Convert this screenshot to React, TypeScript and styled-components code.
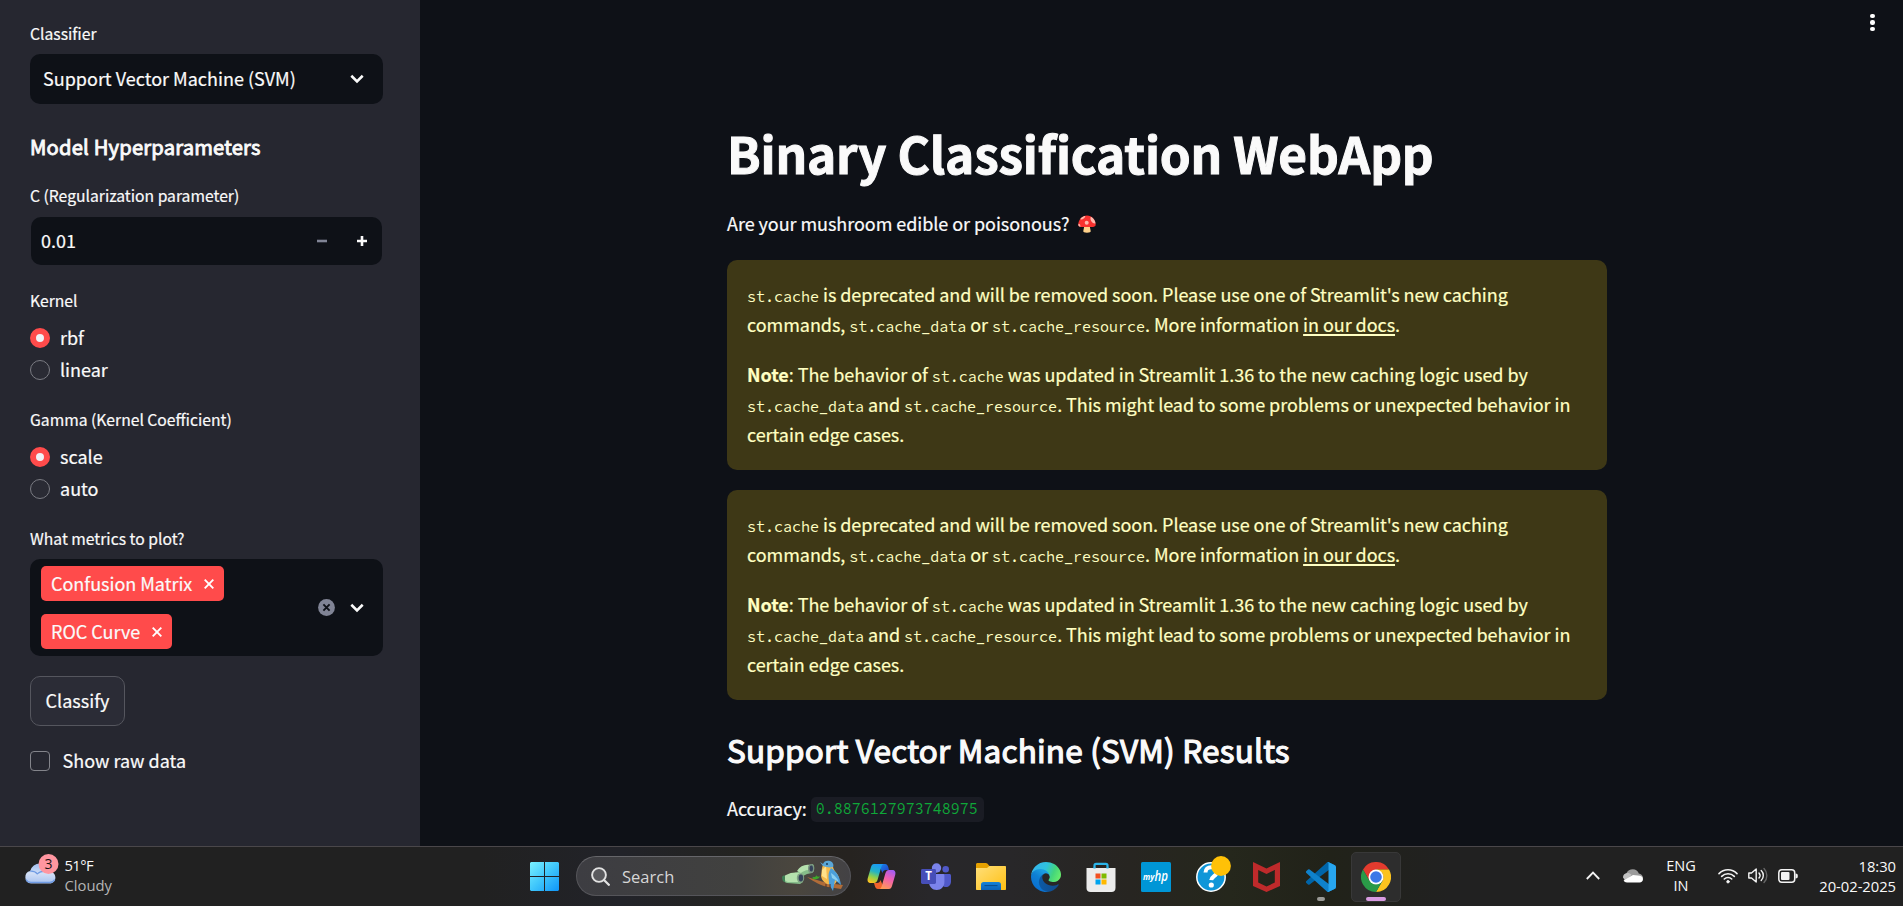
import React from 'react';
import styled, { createGlobalStyle } from 'styled-components';

const sans = `"Source Sans Pro", "Noto Sans CJK SC", "Noto Sans", sans-serif`;
const mono = `"Source Code Pro", "Noto Sans Mono CJK SC", "DejaVu Sans Mono", monospace`;
const system = `"Segoe UI", "Open Sans", "Noto Sans", sans-serif`;

const GlobalStyle = createGlobalStyle`
  * { box-sizing: border-box; }
  html, body { margin: 0; padding: 0; background: #0e1117; overflow: hidden; }
  svg { display: block; flex: none; }
`;

const Screen = styled.div`
  width: 1903px;
  height: 906px;
  display: flex;
  flex-direction: column;
  color: #fafafa;
  font-family: ${sans};
  font-size: 18px;
  overflow: hidden;
`;

const Workspace = styled.div`
  height: 846px;
  display: flex;
  -webkit-text-stroke: 0.2px currentColor;
`;

/* ---------- sidebar ---------- */

const Sidebar = styled.aside`
  width: 420px;
  flex: none;
  background: #262730;
  padding: 20px 37px 0 30px;
  display: flex;
  flex-direction: column;
  align-items: stretch;
`;

const FieldLabel = styled.div<{ $top?: number }>`
  margin-top: ${p => p.$top ?? 0}px;
  height: 28px;
  line-height: 28px;
  font-size: 15.7px;
  white-space: nowrap;
`;

const SelectBox = styled.div`
  margin-top: 6px;
  height: 50px;
  border-radius: 10px;
  background: #0e1117;
  display: flex;
  align-items: center;
  justify-content: space-between;
  padding: 0 19px 0 13px;
  white-space: nowrap;
`;

const Caption = styled.span`
  padding-bottom: 2px;
`;

const SidebarHeading = styled.h2`
  margin: 29px 0 0;
  height: 30px;
  line-height: 27px;
  font-size: 20.2px;
  font-weight: 400;
  -webkit-text-stroke-width: 0.9px;
  letter-spacing: 0.18px;
  white-space: nowrap;
`;

const NumberBox = styled.div`
  margin: 7px 1px 0;
  height: 48px;
  border-radius: 10px;
  background: #0e1117;
  display: flex;
  align-items: center;
  padding: 0 13px 0 10px;
`;

const NumberValue = styled.span`
  flex: 1;
  padding-bottom: 2px;
`;

const StepButton = styled.span<{ $disabled?: boolean }>`
  width: 12px;
  margin-left: 28px;
  color: ${p => (p.$disabled ? '#808495' : '#fafafa')};
`;

const RadioList = styled.div`
  margin-top: 7px;
  display: flex;
  flex-direction: column;
`;

const RadioRow = styled.label`
  height: 32px;
  display: flex;
  align-items: center;
  gap: 10px;
`;

const RadioDot = styled.span<{ $on?: boolean }>`
  width: 20px;
  height: 20px;
  border-radius: 50%;
  border: ${p => (p.$on ? '6px solid #ff4b4b' : '1px solid #7b7c83')};
  background: ${p => (p.$on ? '#f0f2f6' : '#2a2b34')};
`;

const MultiSelect = styled.div`
  margin-top: 6px;
  height: 97px;
  border-radius: 10px;
  background: #0e1117;
  display: flex;
  align-items: center;
  padding: 0 19px 0 11px;
`;

const Tags = styled.div`
  flex: 1;
  display: flex;
  flex-direction: column;
  align-items: flex-start;
  gap: 13px;
`;

const Tag = styled.span`
  height: 35px;
  border-radius: 5px;
  background: #ff4b4b;
  display: flex;
  align-items: center;
  gap: 11.5px;
  padding: 0 10px;
  letter-spacing: -0.02px;
  white-space: nowrap;
`;

const SelectActions = styled.div`
  display: flex;
  align-items: center;
  gap: 15px;
`;

const ClassifyButton = styled.button`
  align-self: flex-start;
  margin: 20px 0 0;
  width: 95px;
  height: 50px;
  border: 1px solid #55565e;
  border-radius: 10px;
  background: #2b2c36;
  color: #fafafa;
  font: inherit;
  padding: 0 0 2px;
`;

const CheckRow = styled.label`
  margin-top: 20px;
  height: 30px;
  display: flex;
  align-items: center;
  gap: 12.5px;
`;

const CheckSquare = styled.span`
  width: 20px;
  height: 20px;
  border: 1px solid #83848a;
  border-radius: 4px;
`;

/* ---------- main column ---------- */

const Main = styled.main`
  flex: 1;
  display: grid;
  grid-template-columns: 880px 1fr;
  padding-left: 307px;
`;

const Content = styled.div`
  display: flex;
  flex-direction: column;
  padding-top: 120px;
`;

const MenuDots = styled.div`
  justify-self: end;
  display: flex;
  flex-direction: column;
  gap: 2px;
  padding: 14px 28.5px 0 0;
`;

const Dot = styled.span`
  width: 4.4px;
  height: 4.4px;
  border-radius: 50%;
  background: #fff;
`;

const Title = styled.h1`
  margin: 0;
  height: 70px;
  line-height: 66px;
  font-size: 49.5px;
  font-weight: 700;
  letter-spacing: -0.18px;
  -webkit-text-stroke-width: 1px;
  white-space: nowrap;
`;

const Intro = styled.p`
  margin: 19px 0 21px;
  height: 30px;
  display: flex;
  align-items: center;
  gap: 8.500px;
  letter-spacing: -0.05px;
`;

const Alert = styled.div`
  height: 210px;
  margin-bottom: 20px;
  padding: 19px 20px;
  border-radius: 10px;
  background: #3e3816;
  color: #ffffc2;
`;

const AlertText = styled.p`
  margin: 0 0 20px;
  line-height: 30px;
`;

const Line = styled.span`
  display: block;
  height: 30px;
  letter-spacing: -0.05px;
  white-space: nowrap;
`;

const Code = styled.code`
  font-family: ${mono};
  font-size: 15px;
  letter-spacing: 0;
  line-height: 1;
  -webkit-text-stroke-width: 0;
`;

const DocsLink = styled.a`
  text-decoration: underline;
  text-decoration-thickness: 2px;
  text-underline-offset: 2px;
  text-decoration-skip-ink: none;
`;

const ResultHeading = styled.h2`
  margin: 9px 0 0;
  height: 46px;
  line-height: 40px;
  font-size: 31.5px;
  font-weight: 400;
  -webkit-text-stroke-width: 1.2px;
  letter-spacing: 0.2px;
  white-space: nowrap;
`;

const Accuracy = styled.p`
  margin: 19px 0 0;
  height: 30px;
  display: flex;
  align-items: center;
  gap: 4px;
  letter-spacing: -0.05px;
`;

const Score = styled.code`
  height: 25px;
  line-height: 24px;
  padding: 0 6px 0 5px;
  border-radius: 5px;
  background: #1a1c24;
  color: #0fa839;
  font-family: ${mono};
  font-size: 15px;
  letter-spacing: 0;
  -webkit-text-stroke-width: 0;
`;

/* ---------- taskbar ---------- */

const Taskbar = styled.footer`
  height: 60px;
  border-top: 1px solid #4a474a;
  background: linear-gradient(90deg, #212121 0, #212121 480px, #222329 620px, #24241f 770px, #262320 850px, #28272a 930px, #282729 1010px, #272521 1130px, #25271c 1230px, #212219 1330px, #212121 1450px);
  display: flex;
  font-family: ${system};
  font-size: 15px;
`;

const Weather = styled.div`
  width: 517px;
  padding: 7px 0 0 24px;
  display: flex;
  align-items: flex-start;
  gap: 5.5px;
`;

const WeatherText = styled.div`
  padding-top: 1px;
  line-height: 20px;
  font-size: 14.8px;
`;

const Temperature = styled.div`
  letter-spacing: -0.6px;
`;

const Muted = styled.div`
  color: #b5b5b5;
`;

const Slot = styled.div`
  width: 55px;
  flex: none;
  height: 59px;
  display: flex;
  align-items: center;
  justify-content: center;
  position: relative;
`;

const ActiveTile = styled.div`
  width: 50px;
  height: 50px;
  border: 1px solid #383838;
  border-radius: 5px;
  background: #2d2d2d;
  display: flex;
  align-items: center;
  justify-content: center;
`;

const Indicator = styled.span<{ $wide?: boolean }>`
  position: absolute;
  bottom: 5px;
  left: 50%;
  transform: translateX(-50%);
  width: ${p => (p.$wide ? 20 : 8)}px;
  height: 4px;
  border-radius: 2px;
  background: ${p => (p.$wide ? '#d99be2' : '#9a9a96')};
`;

const SearchBox = styled.div`
  margin: 9px 2.5px 0 4px;
  width: 275px;
  height: 40px;
  border: 1px solid #55555a;
  border-top-color: #66666a;
  border-radius: 20px;
  background: linear-gradient(90deg, #3d3d42, #41413f 60%, #4a463e 80%, #434245);
  display: flex;
  align-items: center;
  padding: 0 6px 0 14px;
  gap: 12px;
  color: #d6d6d6;
  font-size: 16.5px;
`;

const SearchWord = styled.span`
  flex: 1;
`;

const Tray = styled.div`
  flex: 1;
  display: flex;
  align-items: center;
  justify-content: flex-end;
  padding: 0 7px 2px 0;
`;

const TrayItem = styled.div<{ $w: number }>`
  width: ${p => p.$w}px;
  display: flex;
  justify-content: center;
`;

const Language = styled.div`
  width: 56px;
  text-align: center;
  line-height: 20px;
  font-size: 14.5px;
`;

const Clock = styled.div`
  width: 89px;
  text-align: right;
  line-height: 20px;
  font-size: 14.8px;
  letter-spacing: -0.05px;
  white-space: nowrap;
`;

/* ---------- icons ---------- */

const ChevronDown = () => (
  <svg width="14" height="10" viewBox="0 0 14 10" fill="none" stroke="#fafafa" strokeWidth="2.6">
    <path d="M1.3 1.8 7 7.4l5.700-5.600" />
  </svg>
);

const Cross = () => (
  <svg width="10" height="10" viewBox="0 0 10 10" fill="none" stroke="#fff" strokeWidth="1.9">
    <path d="M.7.7l8.600 8.600M9.300.7.7 9.300" />
  </svg>
);

const ClearIcon = () => (
  <svg width="17" height="17" viewBox="0 0 17 17">
    <circle cx="8.5" cy="8.500" r="8.400" fill="#808495" />
    <path d="M5.400 5.400l6.200 6.200M11.600 5.400l-6.200 6.200" stroke="#0e1117" strokeWidth="1.900" />
  </svg>
);

const Minus = () => (
  <svg width="10" height="10" viewBox="0 0 10 10"><path d="M0 3.700h10v2.600H0z" fill="currentColor" /></svg>
);

const Plus = () => (
  <svg width="10" height="10" viewBox="0 0 10 10"><path d="M0 3.700h3.700V0h2.600v3.700H10v2.600H6.300V10H3.700V6.300H0z" fill="currentColor" /></svg>
);

const Mushroom = () => (
  <svg width="18" height="18" viewBox="0 0 18 18">
    <path d="M6.500 10h5l1.200 6c.2 1-1 1.700-3.700 1.700S5.100 17 5.300 16z" fill="#ffd18a" />
    <path d="M9 .5c5 0 8.700 4.600 8.700 9.300 0 2-2.200 2.200-4 2.200H4.300c-1.800 0-4-.2-4-2.200C.3 5 4 .5 9 .5z" fill="#f8312f" />
    <circle cx="8.700" cy="7.800" r="2" fill="#ffb8ac" />
    <path d="M3.300 2.800C5 1.300 6.600.8 7.200.9c.4 1.300-2 3.500-4.300 3.600-.7 0-.5-.9.400-1.700zM13 1.800c2.700 1.500 4.400 4 4.500 6.600-1.500.5-3.700-.8-4.500-2.700-.7-1.700-.7-3.400 0-3.900zM.5 8.800c1.400 0 2.200 1.500 1.900 3.100C1.200 11.600.3 11 .3 9.800z" fill="#ffb8ac" />
  </svg>
);

const WeatherIcon = () => (
  <svg width="35" height="31" viewBox="0 0 35 31">
    <defs>
      <linearGradient id="cloudFill" x1="0" y1="0" x2="0" y2="1">
        <stop offset="0" stopColor="#9fbef0" /><stop offset=".5" stopColor="#d2dff6" /><stop offset="1" stopColor="#a9c3f0" />
      </linearGradient>
    </defs>
    <path d="M7 29.500a6.300 6.300 0 0 1-.8-12.400A10 10 0 0 1 16 9.500c5.500 0 9.600 3.500 10.400 8.200 3.200.3 5 2.900 5 5.800 0 3.500-2.400 6-5.700 6z" fill="url(#cloudFill)" />
    <path d="M6.200 17.200c3-.2 5.500.8 7 2.600 3-3 9-3 13.200-2M2 25.500c1.200 2.300 3 2.900 5 2.900h18.700c2.500 0 4-1 5-2.800" fill="none" stroke="#6f9be4" strokeWidth="1.200" />
    <circle cx="24.500" cy="10" r="10" fill="#ff96a0" />
    <text x="24.500" y="15" textAnchor="middle" fontSize="14" fill="#1c1416" fontFamily="Open Sans, sans-serif">3</text>
  </svg>
);

const WindowsIcon = () => (
  <svg width="29" height="29" viewBox="0 0 29 29">
    <defs>
      <linearGradient id="winFill" gradientUnits="userSpaceOnUse" x1="0" y1="0" x2="29" y2="29">
        <stop offset="0" stopColor="#7af2ff" /><stop offset=".5" stopColor="#3fc6fb" /><stop offset="1" stopColor="#0f95f8" />
      </linearGradient>
    </defs>
    <path d="M1 0h13v14H0V1zM15 0h13l1 1v13H15zM0 15h14v14H1l-1-1zM15 15h14v13l-1 1H15z" fill="url(#winFill)" />
  </svg>
);

const SearchIcon = () => (
  <svg width="19" height="19" viewBox="0 0 19 19" fill="none" stroke="#e2e2e2">
    <circle cx="8" cy="8" r="6.900" strokeWidth="1.900" fill="#5a5a5e" />
    <path d="M13 13l4.800 4.800" strokeWidth="2.300" strokeLinecap="round" />
  </svg>
);

const SearchArt = () => (
  <svg width="62" height="32" viewBox="0 0 62 32">
    <path d="M2 16l14-4c2-4 5-6 8-6l6-2c3 0 3 8 0 9l-5 1-4 2v6l-3 2-13-1c-4-1-5-5-3-7z" fill="#86bd8a" />
    <path d="M4 15c5-3 10-3 15-2l-2 9H6c-4-1-5-5-2-7zM15 11c3-5 8-7 13-6l-1 5c-4 0-7 2-8 3z" fill="#b5e2ae" />
    <ellipse cx="29" cy="8.500" rx="3" ry="4.500" fill="#77917f" /><ellipse cx="29.300" cy="8.500" rx="1.700" ry="3" fill="#35435a" />
    <ellipse cx="18.500" cy="18" rx="3.700" ry="4.800" fill="#7fa284" /><ellipse cx="18.900" cy="18" rx="2.300" ry="3.400" fill="#35435a" />
    <path d="M0 17c1-2 3-2 3 0v5c-2 0-3-2-3-5z" fill="#3f7f55" />
    <path d="M25 17l20 6 16 2-2 4-13-2c-6-1-14-5-21-10z" fill="#b06c38" />
    <path d="M30 18c2-2 4 0 4-3 1 2 3 2 4 1-1 4-6 4-8 2z" fill="#3fa629" />
    <path d="M40 8c1-5 4-7 8-6l3 4c0 5 5 7 6 12l-4 6c-8 2-13-2-14-8z" fill="#f5b94b" />
    <path d="M40 10l4-4 1 13-5-3z" fill="#ffe18a" />
    <path d="M41 4c1-3 4-4 7-3 3 1 4 4 3 6-3 1-7 0-10-1l-3-4z" fill="#5aa7d8" />
    <path d="M49 8c6 4 9 9 10 17l-6-5-2 11-4-7c0-6-2-10 2-16z" fill="#4b9fdb" />
    <path d="M49 13c5 3 7 7 8 9l-7-4z" fill="#8bcff0" />
    <circle cx="45" cy="4" r=".9" fill="#16324a" />
    <path d="M44 24v3M48 24v4" stroke="#533322" strokeWidth="1" />
  </svg>
);

const CopilotIcon = () => (
  <svg width="29" height="27" viewBox="0 0 29 27">
    <defs>
      <linearGradient id="copA" x1=".6" y1="0" x2=".3" y2="1">
        <stop offset="0" stopColor="#1a9af5" /><stop offset=".4" stopColor="#23b3c5" /><stop offset=".7" stopColor="#8fd04b" /><stop offset="1" stopColor="#ffc31f" />
      </linearGradient>
      <linearGradient id="copB" x1=".7" y1="0" x2=".3" y2="1">
        <stop offset="0" stopColor="#a55cf2" /><stop offset=".45" stopColor="#f260ae" /><stop offset="1" stopColor="#ff9a55" />
      </linearGradient>
      <linearGradient id="copC" x1="0" y1="0" x2="1" y2="1">
        <stop offset="0" stopColor="#178bea" /><stop offset="1" stopColor="#2338c8" />
      </linearGradient>
    </defs>
    <path d="M12 1h6c2 0 2.700 1.300 3.300 3.300L22 7h-3c-2 0-3 1-3.700 3z" fill="url(#copC)" />
    <path d="M17 26h-6c-2 0-2.600-1.500-3.300-3.500L7 20h3c2 0 3-1 3.600-3z" fill="#f1632c" />
    <path d="M7 1h9.500c-1.500.6-2 2-2.500 4l-3.500 12c-.7 2-1.700 3-3.500 3H4c-3 0-4-2-3.200-5L4 4c.6-2 1.500-3 3-3z" fill="url(#copA)" />
    <path d="M22 26h-9.500c1.500-.6 2-2 2.500-4l3.500-12c.7-2 1.700-3 3.500-3h3c3 0 4 2 3.200 5L25 23c-.6 2-1.500 3-3 3z" fill="url(#copB)" />
  </svg>
);

const TeamsIcon = () => (
  <svg width="30" height="28" viewBox="0 0 30 28">
    <circle cx="24.700" cy="6.200" r="3.300" fill="#5059c9" />
    <path d="M20 11h8.500c.8 0 1.500.7 1.500 1.500v6c0 3.500-2.300 5.500-5 5.500s-5-2-5-5z" fill="#5059c9" />
    <circle cx="15.500" cy="5" r="4.700" fill="#7b83eb" />
    <path d="M8 11h14c.8 0 1.400.6 1.400 1.400V19c0 4.600-3.300 8-7.700 8S8 23.600 8 19z" fill="#7b83eb" />
    <rect x="0" y="6" width="15" height="15" rx="1.400" fill="#464eb8" />
    <text x="7.500" y="17.300" textAnchor="middle" fontSize="11.500" fontWeight="700" fill="#fff" fontFamily="Open Sans, sans-serif">T</text>
  </svg>
);

const FolderIcon = () => (
  <svg width="30" height="27" viewBox="0 0 30 27">
    <defs>
      <linearGradient id="folderFill" x1="0" y1="0" x2="1" y2="1"><stop offset="0" stopColor="#ffdf7a" /><stop offset="1" stopColor="#ffc013" /></linearGradient>
      <linearGradient id="folderBase" x1="0" y1="0" x2="0" y2="1"><stop offset="0" stopColor="#1482d8" /><stop offset="1" stopColor="#0b62b8" /></linearGradient>
    </defs>
    <path d="M0 1.500C0 .6.600 0 1.500 0h8.300c.7 0 1 .2 1.500.6L13.500 3H28v5H0z" fill="#e6a100" />
    <path d="M0 5h11l2.500-2H29c.6 0 1 .4 1 1v22c0 .6-.4 1-1 1H1c-.6 0-1-.4-1-1z" fill="url(#folderFill)" />
    <path d="M5 27v-5.500C5 20 6 19 7.500 19h15c1.500 0 2.500 1 2.500 2.500V27z" fill="url(#folderBase)" />
    <path d="M8.500 22.600h13" stroke="#084a8c" strokeWidth="1" />
  </svg>
);

const EdgeIcon = () => (
  <svg width="30" height="30" viewBox="0 0 256 256">
    <defs>
      <linearGradient id="edgeA" x1=".1" y1=".5" x2="1" y2=".5"><stop offset="0" stopColor="#0c59a4" /><stop offset="1" stopColor="#114a8b" /></linearGradient>
      <linearGradient id="edgeB" x1=".7" y1=".2" x2=".3" y2=".9"><stop offset="0" stopColor="#1b9de2" /><stop offset=".4" stopColor="#0e80d4" /><stop offset="1" stopColor="#0a6fd0" /></linearGradient>
      <linearGradient id="edgeC" x1="0" y1=".3" x2="1" y2=".6"><stop offset="0" stopColor="#35b5ee" /><stop offset=".45" stopColor="#2fc2df" /><stop offset=".75" stopColor="#43d57c" /><stop offset="1" stopColor="#66eb6e" /></linearGradient>
    </defs>
    <g transform="translate(-4.630 -4.920)">
      <path fill="url(#edgeA)" d="M235.680 195.460a93.730 93.730 0 0 1-10.540 4.710 101.870 101.870 0 0 1-35.900 6.460c-47.320 0-88.540-32.550-88.540-74.320A31.480 31.480 0 0 1 117.130 105c-42.800 1.800-53.800 46.400-53.800 72.530 0 73.880 68.090 81.370 82.760 81.370 7.910 0 19.840-2.300 27-4.560l1.310-.44a128.340 128.340 0 0 0 66.600-52.800 4 4 0 0 0-5.320-5.640Z" />
      <path fill="url(#edgeB)" d="M110.340 246.340A79.200 79.200 0 0 1 87.600 225a80.720 80.720 0 0 1 29.530-120c3.120-1.470 8.450-4.130 15.540-4a32.350 32.350 0 0 1 25.690 13 31.880 31.880 0 0 1 6.360 18.660c0-.21 24.460-79.600-80-79.600-43.900 0-80 41.660-80 78.210a130.150 130.150 0 0 0 12.110 56 128 128 0 0 0 156.380 67.110 75.550 75.550 0 0 1-62.780-8Z" />
      <path fill="url(#edgeC)" d="M156.940 153.780c-.81 1.050-3.300 2.500-3.300 5.660 0 2.610 1.700 5.120 4.720 7.230 14.380 10 41.490 8.680 41.560 8.680a59.560 59.560 0 0 0 30.270-8.350 61.380 61.380 0 0 0 30.430-52.880c.26-22.410-8-37.310-11.340-43.910C228.090 28.760 182.350 4.920 132.610 4.920a128 128 0 0 0-128 126.200c.48-36.540 36.800-66.050 80-66.050 3.500 0 23.460.34 42 10.070 16.340 8.580 24.900 18.940 30.850 29.210 6.180 10.670 7.280 24.150 7.280 29.520s-2.740 13.330-7.800 19.910Z" />
    </g>
  </svg>
);

const StoreIcon = () => (
  <svg width="30" height="30" viewBox="0 0 30 30">
    <path d="M8.500 8V3.500c0-1 .7-1.700 1.700-1.700h9.600c1 0 1.700.7 1.700 1.700V8" fill="none" stroke="#2bb5ea" strokeWidth="2.200" />
    <path d="M.5 6h29v20c0 2.500-1.500 4-4 4h-21c-2.500 0-4-1.500-4-4z" fill="#ececec" />
    <path d="M8.500 5.500v.9M21.500 5.500v.9" stroke="#2bb5ea" strokeWidth="2.200" />
    <path d="M9.500 11.500h5v5h-5z" fill="#f25022" /><path d="M15.500 11.500h5v5h-5z" fill="#7fba00" />
    <path d="M9.500 17.500h5v5h-5z" fill="#00a4ef" /><path d="M15.500 17.500h5v5h-5z" fill="#ffb900" />
  </svg>
);

const MyHpIcon = () => (
  <svg width="30" height="30" viewBox="0 0 30 30">
    <rect width="30" height="30" rx="1.500" fill="#0096d6" />
    <text x="2" y="17.500" fontSize="9.500" fontStyle="italic" fontWeight="700" fill="#fff" fontFamily="Open Sans, sans-serif" textLength="11.500" lengthAdjust="spacingAndGlyphs">my</text>
    <text x="13.500" y="19" fontSize="15" fontStyle="italic" fontWeight="600" fill="#fff" fontFamily="Open Sans, sans-serif" textLength="13.500" lengthAdjust="spacingAndGlyphs">hp</text>
  </svg>
);

const HelpIcon = () => (
  <svg width="36" height="42" viewBox="0 0 36 42">
    <circle cx="18" cy="21" r="14.200" fill="#0f96d8" stroke="#fff" strokeWidth="1.500" />
    <path d="M12.500 16.500c0-3.500 2.500-5.300 5.700-5.300s5.600 1.700 5.600 4.700c0 4.200-5.300 4-5.600 8.300" fill="none" stroke="#fff" strokeWidth="4" />
    <circle cx="18.300" cy="29" r="2.600" fill="#fff" />
    <circle cx="28" cy="10" r="9.900" fill="#ffc107" />
  </svg>
);

const HelpSlot = styled(Slot)`
  svg { overflow: visible; }
`;

const McAfeeIcon = () => (
  <svg width="27" height="30" viewBox="0 0 27 30">
    <path fillRule="evenodd" fill="#bf2a2b" d="M0 0l13.500 6.500L27 0v24l-13.500 6L0 24zM5.200 8v12.600l8.300 3.800 8.300-3.800V8l-8.300 4z" />
  </svg>
);

const VsCodeIcon = () => (
  <svg width="30" height="30" viewBox="0 0 100 100">
    <path d="M96.500 10.800L75.900.9a6.200 6.200 0 0 0-7.100 1.200L1.300 63.600a4.200 4.200 0 0 0 0 6.100l5.500 5a4.200 4.200 0 0 0 5.300.2L93.400 13.300c2.700-2.100 6.600-.1 6.600 3.300v-.2c0-2.400-1.400-4.600-3.500-5.600z" fill="#0065a9" />
    <path d="M96.500 89.200l-20.600 9.900a6.200 6.200 0 0 1-7.100-1.200L1.300 36.400a4.200 4.200 0 0 1 0-6.100l5.500-5a4.200 4.200 0 0 1 5.300-.2l81.300 61.600c2.700 2.100 6.600.1 6.600-3.300v.2c0 2.400-1.400 4.600-3.500 5.600z" fill="#0f82cc" />
    <path d="M75.900 99.100a6.200 6.200 0 0 1-7.100-1.200c2.300 2.300 6.200.7 6.200-2.600V4.700c0-3.300-3.900-4.900-6.200-2.600A6.200 6.200 0 0 1 75.900.9l20.600 9.900c2.200 1 3.500 3.200 3.500 5.600v67.200c0 2.400-1.400 4.600-3.500 5.600z" fill="#27a6f0" />
  </svg>
);

const ChromeIcon = () => (
  <svg width="30" height="30" viewBox="0 0 48 48">
    <path d="M3.200 12A24 24 0 0 1 44.800 12H24L13.600 30z" fill="#e33b2e" />
    <path d="M44.800 12A24 24 0 0 1 24 48l10.400-18L36 24l-2-6.500L24 12z" fill="#fcc31e" />
    <path d="M24 48A24 24 0 0 1 3.200 12l10.400 18L24 36l10.400-6z" fill="#2a9a48" />
    <circle cx="24" cy="24" r="12" fill="#fff" />
    <circle cx="24" cy="24" r="9.300" fill="#3b78e7" />
  </svg>
);

const TrayChevron = () => (
  <svg width="14" height="9" viewBox="0 0 14 9" fill="none" stroke="#f3f3f3" strokeWidth="1.800"><path d="M.8 8 7 1.600 13.200 8" /></svg>
);

const TrayCloud = () => (
  <svg width="20" height="14" viewBox="0 0 20 14">
    <path d="M4 12.500a4.300 4.300 0 0 1-.6-8.200C4.500 1.700 7 .3 9.800.3c3 0 5.200 1.700 6 4.300 2.300.2 4.200 2 4.200 4.400z" fill="#9b9b9b" />
    <path d="M0 8.500c0-2.500 1.500-4 3.500-4.300 2-.4 3.500.3 5 1.500L3 12z" fill="#c2c2c2" />
    <path d="M4 13.500c-1.500 0-2.800-.8-3.400-2L10 6l7 .8c1.800.2 3 1.700 3 3.300 0 2-1.500 3.400-3.300 3.400z" fill="#fff" />
  </svg>
);

const WifiIcon = () => (
  <svg width="20" height="16" viewBox="0 0 20 16" fill="none" stroke="#f3f3f3" strokeWidth="1.600" strokeLinecap="round">
    <path d="M1 5.600a12.500 12.500 0 0 1 18 0M3.700 8.400a8.800 8.800 0 0 1 12.600 0M6.300 11a5.200 5.200 0 0 1 7.400 0" />
    <circle cx="10" cy="13.700" r="1.300" fill="#f3f3f3" strokeWidth=".8" />
  </svg>
);

const VolumeIcon = () => (
  <svg width="20" height="17" viewBox="0 0 20 17" fill="none" stroke="#f3f3f3" strokeWidth="1.400" strokeLinecap="round" strokeLinejoin="round">
    <path d="M.8 6h2.700L8.200 2v13l-4.700-4H.8z" />
    <path d="M11 6a3.800 3.800 0 0 1 0 5M13.200 3.500a7 7 0 0 1 0 10" />
    <path d="M16 1.500a10 10 0 0 1 0 14" stroke="#666" />
  </svg>
);

const BatteryIcon = () => (
  <svg width="20" height="14" viewBox="0 0 20 14">
    <rect x=".8" y=".8" width="15.900" height="12.400" rx="3" fill="none" stroke="#f3f3f3" strokeWidth="1.500" />
    <rect x="3" y="3" width="8.500" height="8" rx="1" fill="#f3f3f3" />
    <path d="M17.500 4.500c1.600 0 2.300.7 2.300 2.500s-.7 2.500-2.300 2.500z" fill="#f3f3f3" />
  </svg>
);

/* ---------- composed parts ---------- */

const RadioGroup = ({ options }: { options: string[] }) => (
  <RadioList>
    {options.map((option, i) => (
      <RadioRow key={option}><RadioDot $on={i === 0} /><Caption>{option}</Caption></RadioRow>
    ))}
  </RadioList>
);

const CacheWarning = () => (
  <Alert>
    <AlertText>
      <Line><Code>st.cache</Code> is deprecated and will be removed soon. Please use one of Streamlit's new caching</Line>
      <Line>commands, <Code>st.cache_data</Code> or <Code>st.cache_resource</Code>. More information <DocsLink>in our docs</DocsLink>.</Line>
    </AlertText>
    <AlertText>
      <Line><b>Note</b>: The behavior of <Code>st.cache</Code> was updated in Streamlit 1.36 to the new caching logic used by</Line>
      <Line><Code>st.cache_data</Code> and <Code>st.cache_resource</Code>. This might lead to some problems or unexpected behavior in</Line>
      <Line>certain edge cases.</Line>
    </AlertText>
  </Alert>
);

export default function App() {
  return (
    <>
      <GlobalStyle />
      <Screen>
        <Workspace>
          <Sidebar>
            <FieldLabel>Classifier</FieldLabel>
            <SelectBox><Caption>Support Vector Machine (SVM)</Caption><ChevronDown /></SelectBox>
            <SidebarHeading>Model Hyperparameters</SidebarHeading>
            <FieldLabel $top={19}>C (Regularization parameter)</FieldLabel>
            <NumberBox>
              <NumberValue>0.01</NumberValue>
              <StepButton $disabled><Minus /></StepButton>
              <StepButton><Plus /></StepButton>
            </NumberBox>
            <FieldLabel $top={22}>Kernel</FieldLabel>
            <RadioGroup options={['rbf', 'linear']} />
            <FieldLabel $top={20}>Gamma (Kernel Coefficient)</FieldLabel>
            <RadioGroup options={['scale', 'auto']} />
            <FieldLabel $top={20}>What metrics to plot?</FieldLabel>
            <MultiSelect>
              <Tags>
                <Tag><Caption>Confusion Matrix</Caption><Cross /></Tag>
                <Tag><Caption>ROC Curve</Caption><Cross /></Tag>
              </Tags>
              <SelectActions><ClearIcon /><ChevronDown /></SelectActions>
            </MultiSelect>
            <ClassifyButton>Classify</ClassifyButton>
            <CheckRow><CheckSquare /><Caption>Show raw data</Caption></CheckRow>
          </Sidebar>
          <Main>
            <Content>
              <Title>Binary Classification WebApp</Title>
              <Intro><Caption>Are your mushroom edible or poisonous?</Caption><Mushroom /></Intro>
              <CacheWarning />
              <CacheWarning />
              <ResultHeading>Support Vector Machine (SVM) Results</ResultHeading>
              <Accuracy><Caption>Accuracy:</Caption><Score>0.8876127973748975</Score></Accuracy>
            </Content>
            <MenuDots><Dot /><Dot /><Dot /></MenuDots>
          </Main>
        </Workspace>
        <Taskbar>
          <Weather>
            <WeatherIcon />
            <WeatherText><Temperature>51°F</Temperature><Muted>Cloudy</Muted></WeatherText>
          </Weather>
          <Slot><WindowsIcon /></Slot>
          <SearchBox><SearchIcon /><SearchWord>Search</SearchWord><SearchArt /></SearchBox>
          <Slot><CopilotIcon /></Slot>
          <Slot><TeamsIcon /></Slot>
          <Slot><FolderIcon /></Slot>
          <Slot><EdgeIcon /></Slot>
          <Slot><StoreIcon /></Slot>
          <Slot><MyHpIcon /></Slot>
          <HelpSlot><HelpIcon /></HelpSlot>
          <Slot><McAfeeIcon /></Slot>
          <Slot><VsCodeIcon /><Indicator /></Slot>
          <Slot><ActiveTile><ChromeIcon /></ActiveTile><Indicator $wide /></Slot>
          <Tray>
            <TrayItem $w={40}><TrayChevron /></TrayItem>
            <TrayItem $w={40}><TrayCloud /></TrayItem>
            <Language>ENG<br />IN</Language>
            <TrayItem $w={38}><WifiIcon /></TrayItem>
            <TrayItem $w={22}><VolumeIcon /></TrayItem>
            <TrayItem $w={38}><BatteryIcon /></TrayItem>
            <Clock>18:30<br />20-02-2025</Clock>
          </Tray>
        </Taskbar>
      </Screen>
    </>
  );
}
